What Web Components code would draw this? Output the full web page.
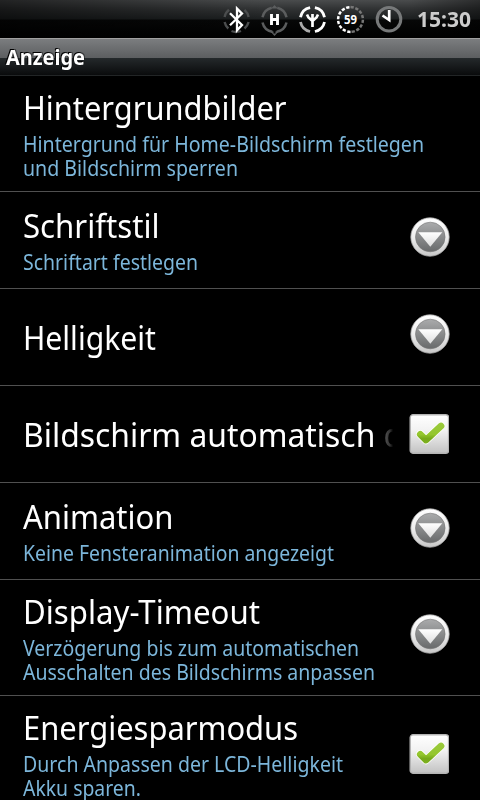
<!DOCTYPE html>
<html lang="de"><head><meta charset="utf-8"><title>Anzeige</title>
<style>
html,body{margin:0;background:#000;width:480px;height:800px;overflow:hidden}
body{font-family:"Noto Sans","Open Sans",sans-serif;color:#fff}
</style></head><body>
<settings-screen></settings-screen>
<script>
// Text condensed horizontally so that it spans the given width.
class FitText extends HTMLElement{
  connectedCallback(){
    const r=this.attachShadow({mode:'open'});
    r.innerHTML='<style>:host{display:block;white-space:nowrap}span{display:inline-block;transform-origin:0 50%}</style><span></span>';
    const s=r.querySelector('span');s.textContent=this.getAttribute('text');
    const w=s.getBoundingClientRect().width;
    if(w)s.style.transform='scaleX('+(+this.getAttribute('w')/w)+')';
  }
}
customElements.define('fit-text',FitText);

class StatusBar extends HTMLElement{
  connectedCallback(){
    this.attachShadow({mode:'open'}).innerHTML=`<style>
    :host{display:flex;box-sizing:border-box;height:38px;align-items:center;padding-left:218px;
      background:linear-gradient(90deg,#0008 0,#0000 55%,#0000 85%,#0006),linear-gradient(#4a4c4d 0,#303233 9px,#1c1f20 19px,#070808 20px,#000 37px)}
    svg{display:block;width:190px;height:38px;flex:none}
    fit-text{margin-left:9px;width:54px;font:bold 20.5px/38px "Noto Sans","Open Sans",sans-serif;color:#ccc}
    </style>
    <svg viewBox="218 0 190 38" fill="none">
      <path d="M229 9.8A12.2 12.2 0 0 0 224.6 17M224.6 22A12.2 12.2 0 0 0 228.3 28.5M231.5 31Q236 33 241 31M244.5 28.5A12.2 12.2 0 0 0 248.6 22M248.6 17A12.2 12.2 0 0 0 244.5 9.8" stroke="#4b4d4e" stroke-width="2.4"/>
      <path d="M230 13.3L242 25L237 30.3V8.5L242 13.6L230 25.3" stroke="#fff" stroke-width="2.3"/>
      <path d="M271.7 7.8A12.2 12.2 0 0 0 262.5 17.3M262.5 22.5A12.2 12.2 0 0 0 272.3 31.8M277.3 7.8A12.2 12.2 0 0 1 286.5 17.3M286.5 22.5A12.2 12.2 0 0 1 276.7 31.8" stroke="#5b5d5e" stroke-width="2.5"/>
      <path d="M269.5 30.5L274.5 36L279.5 30.5L275.5 31.5V33.5H273.5V31.5ZM271 8.5L274.5 5L278 8.5Z" fill="#5b5d5e"/>
      <path d="M271.5 14V25M277.5 14V25M271.5 19.5H277.5" stroke="#fff" stroke-width="2.9"/>
      <path d="M300.5 17.3A12.2 12.2 0 0 1 310.1 7.6M314.9 7.6A12.2 12.2 0 0 1 324.5 17.3M324.5 22A12.2 12.2 0 0 1 314.9 31.5" stroke="#fff" stroke-width="2.8"/>
      <path d="M310.1 31.5A12.2 12.2 0 0 1 300.5 22" stroke="#aaa" stroke-width="2.8"/>
      <path d="M312.5 27V14M307 14.5L308.5 17.5L312.5 21L316.5 17.5L318 14.5" stroke="#fff" stroke-width="2.7"/>
      <path d="M350.5 7.1A12.4 12.4 0 0 1 350.5 31.9" stroke="#777" stroke-width="2.5" stroke-dasharray="3.3 1.6"/>
      <path d="M350.5 31.9A12.4 12.4 0 0 1 350.5 7.1" stroke="#fff" stroke-width="2.5" stroke-dasharray="3.3 1.6"/>
      <text x="350.5" y="23.5" text-anchor="middle" fill="#fff" font-family="Noto Sans,Open Sans,sans-serif" font-weight="bold" font-size="11.5" textLength="13" lengthAdjust="spacingAndGlyphs">59</text>
      <circle cx="389" cy="19.2" r="11.8" stroke="#77797a" stroke-width="3"/>
      <path d="M389.2 10V20L382.5 15.5" stroke="#fff" stroke-width="2.7"/>
    </svg><fit-text text="15:30" w="54"></fit-text>`;
  }
}
customElements.define('status-bar',StatusBar);

class TitleBar extends HTMLElement{
  connectedCallback(){
    this.attachShadow({mode:'open'}).innerHTML=`<style>
    :host{display:block;box-sizing:border-box;height:38px;padding-left:6px;border-top:1px solid #a0a0a0;border-bottom:1px solid #222526;
     background:linear-gradient(#7b7d7f 0,#5c5e60 19px,#24292b 19px,#0a0b0c 36px)}
    fit-text{font:bold 21px/36px "Noto Sans","Open Sans",sans-serif;text-shadow:-1px -1px 0 #000,1px -1px 0 #0006}
    </style><fit-text text="Anzeige" w="79"></fit-text>`;
  }
}
customElements.define('title-bar',TitleBar);

class SelectIcon extends HTMLElement{
  connectedCallback(){
    this.attachShadow({mode:'open'}).innerHTML=`<style>:host{display:block;width:40px;height:40px;margin-top:-6px}svg{display:block}</style>
    <svg width="40" height="40" viewBox="0 0 40 40"><defs>
    <linearGradient id="a" x2="0" y2="1"><stop stop-color="#fff"/><stop offset=".5" stop-color="#eee"/><stop offset="1" stop-color="#c8c8c8"/></linearGradient>
    <linearGradient id="b" x2="0" y2="1"><stop stop-color="#aaabac"/><stop offset="1" stop-color="#686a6b"/></linearGradient>
    <linearGradient id="c" x2="0" y2="1"><stop stop-color="#fff"/><stop offset="1" stop-color="#ddd"/></linearGradient></defs>
    <circle cx="20" cy="20" r="19.2" fill="url(#a)" stroke="#aaa" stroke-width=".8"/>
    <circle cx="20.3" cy="20" r="14.8" fill="url(#b)" stroke="#777" stroke-width=".6"/>
    <path d="M8.3 15.2H32.3L20.3 29.8Z" fill="url(#c)"/></svg>`;
  }
}
customElements.define('select-icon',SelectIcon);

class CheckIcon extends HTMLElement{
  connectedCallback(){
    this.attachShadow({mode:'open'}).innerHTML=`<style>:host{display:block;width:40px;height:40px;margin-right:1px}svg{display:block}</style>
    <svg width="40" height="40" viewBox="0 0 40 40"><defs>
    <linearGradient id="a" x2="0" y2="1"><stop stop-color="#fff"/><stop offset=".4" stop-color="#f2f2f2"/><stop offset="1" stop-color="#c2c2c2"/></linearGradient>
    <linearGradient id="g" gradientUnits="userSpaceOnUse" x1="0" y1="9" x2="0" y2="30"><stop stop-color="#9aca3c"/><stop offset=".55" stop-color="#94c62e"/><stop offset=".75" stop-color="#76a81a"/><stop offset="1" stop-color="#80b322"/></linearGradient></defs>
    <rect x="1.2" y=".8" width="38.4" height="38.4" rx="2.8" fill="url(#a)" stroke="#b4b4b4" stroke-width="1.4"/>
    <path d="M11.3 20.3L17 26L32 12" fill="none" stroke="#fff" stroke-width="8.4" stroke-linecap="round" stroke-linejoin="round"/>
    <path d="M11.3 20.3L17 26L32 12" fill="none" stroke="url(#g)" stroke-width="6.8" stroke-linecap="round" stroke-linejoin="round"/></svg>`;
  }
}
customElements.define('check-icon',CheckIcon);

class SettingRow extends HTMLElement{
  connectedCallback(){
    const two=this.querySelector('summary-text')?' two':'',fade=this.hasAttribute('fade')?' fade':'';
    this.attachShadow({mode:'open'}).innerHTML=`<style>
    :host{display:flex;box-sizing:border-box;flex:none;height:97px;border-bottom:1px solid #505050;align-items:center;padding:0 30px 0 23px}
    :host([tall]){height:116px}
    .text{flex:1;min-width:0;display:flex;flex-direction:column;gap:7px;padding-top:2px}
    .text.two{padding-top:3px}
    :host([tall]) .text.two{padding-top:4px}
    .title{font-size:33.5px;line-height:32px;height:34px}
    .fade .title{width:370px;height:44px;line-height:42px;overflow:hidden;-webkit-mask-image:linear-gradient(90deg,#000 350px,#0005 361px,#0003 367px,transparent 370px)}
    </style><div class="text${two}${fade}"><fit-text class="title" text="${this.getAttribute('label')}" w="${this.getAttribute('w')}"></fit-text><slot></slot></div><slot name="widget"></slot>`;
  }
}
customElements.define('setting-row',SettingRow);

class SummaryText extends HTMLElement{
  connectedCallback(){
    this.attachShadow({mode:'open'}).innerHTML=`<style>:host{display:block;font-size:21px;line-height:24px;color:#7cb6da}</style><slot></slot>`;
  }
}
customElements.define('summary-text',SummaryText);

class SettingsScreen extends HTMLElement{
  connectedCallback(){
    this.attachShadow({mode:'open'}).innerHTML=`<style>:host{display:flex;flex-direction:column;width:480px;height:800px;overflow:hidden;background:#000}
    status-bar,title-bar{flex:none}</style>
    <status-bar></status-bar><title-bar></title-bar>
    <setting-row tall label="Hintergrundbilder" w="263.5"><summary-text><fit-text text="Hintergrund für Home-Bildschirm festlegen" w="401"></fit-text><fit-text text="und Bildschirm sperren" w="215"></fit-text></summary-text></setting-row>
    <setting-row label="Schriftstil" w="136.5"><summary-text><fit-text text="Schriftart festlegen" w="175"></fit-text></summary-text><select-icon slot="widget"></select-icon></setting-row>
    <setting-row label="Helligkeit" w="133"><select-icon slot="widget"></select-icon></setting-row>
    <setting-row fade label="Bildschirm automatisch drehen" w="468"><check-icon slot="widget"></check-icon></setting-row>
    <setting-row label="Animation" w="150.5"><summary-text><fit-text text="Keine Fensteranimation angezeigt" w="311"></fit-text></summary-text><select-icon slot="widget"></select-icon></setting-row>
    <setting-row tall label="Display-Timeout" w="237"><summary-text><fit-text text="Verzögerung bis zum automatischen" w="336"></fit-text><fit-text text="Ausschalten des Bildschirms anpassen" w="352"></fit-text></summary-text><select-icon slot="widget" style="margin-top:-8px"></select-icon></setting-row>
    <setting-row tall label="Energiesparmodus" w="275"><summary-text><fit-text text="Durch Anpassen der LCD-Helligkeit" w="320"></fit-text><fit-text text="Akku sparen." w="118"></fit-text></summary-text><check-icon slot="widget"></check-icon></setting-row>`;
  }
}
customElements.define('settings-screen',SettingsScreen);
</script></body></html>
